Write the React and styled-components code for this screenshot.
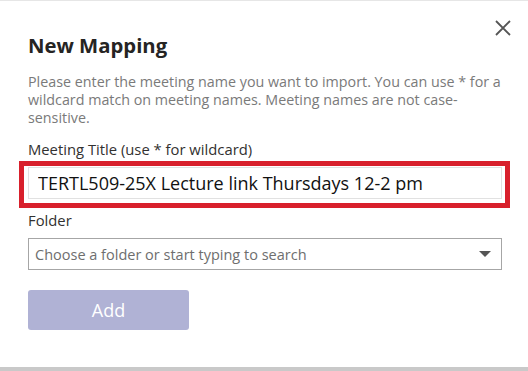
import styled, { createGlobalStyle } from "styled-components";

const GlobalStyle = createGlobalStyle`
  html, body {
    margin: 0;
    padding: 0;
    background: #ffffff;
  }
  * {
    box-sizing: border-box;
  }
`;

const Dialog = styled.div`
  position: relative;
  width: 528px;
  height: 371px;
  background: #fff;
  border-top: 1px solid #e6e6e6;
  border-bottom: 4px solid #c9c9c9;
  padding: 19px 26px 0 28px;
  font-family: "Open Sans", "Noto Sans", sans-serif;
  overflow: hidden;
`;

const Header = styled.div`
  display: flex;
  justify-content: space-between;
  align-items: flex-start;
  margin-right: -9px;
`;

const Title = styled.h1`
  margin: 11px 0 0;
  font-size: 20.3px;
  line-height: 28px;
  font-weight: 700;
  color: #252423;
`;

const CloseButton = styled.button`
  width: 16px;
  height: 16px;
  padding: 0;
  border: 0;
  background: none;
  cursor: pointer;
  display: flex;
`;

const Description = styled.p`
  margin: 14px 0 0;
  font-size: 14.3px;
  line-height: 18px;
  color: #7a7a7a;
`;

const Label = styled.label`
  display: block;
  margin-top: ${(p) => p.$top || 12}px;
  font-size: 14.8px;
  line-height: 20px;
  font-weight: 500;
  color: #323130;
`;

const Highlight = styled.div`
  margin: 2px -8px 0 -9px;
  padding: 1px 3px 4px 4px;
  border: 5px solid #d8202c;
`;

const TextInput = styled.input`
  display: block;
  width: 100%;
  height: 32px;
  padding: 0 9px;
  border: 1px solid #e1e1e1;
  font-family: inherit;
  font-size: 18px;
  color: #111;
  outline: none;
  background: #fff;
`;

const Select = styled.div`
  margin-top: 8px;
  height: 32px;
  border: 1px solid #a6a6a6;
  display: flex;
  align-items: center;
  justify-content: space-between;
  padding: 0 10px 0 6px;
  font-size: 14.5px;
  color: #6e6e6e;
`;

const Caret = styled.span`
  width: 0;
  height: 0;
  border-left: 6px solid transparent;
  border-right: 6px solid transparent;
  border-top: 6px solid #555;
`;

const AddButton = styled.button`
  margin-top: 20px;
  width: 161px;
  height: 40px;
  border: 0;
  border-radius: 3px;
  background: #b0b2d5;
  color: #fff;
  font-family: inherit;
  font-size: 18px;
  font-weight: 400;
`;

export default function App() {
  return (
    <>
      <GlobalStyle />
      <Dialog>
        <Header>
          <Title>New Mapping</Title>
          <CloseButton aria-label="Close">
            <svg width="16" height="16" viewBox="0 0 16 16">
              <path d="M1 1 L15 15 M15 1 L1 15" stroke="#555" strokeWidth="1.8" fill="none" />
            </svg>
          </CloseButton>
        </Header>
        <Description>
          Please enter the meeting name you want to import. You can use * for a wildcard match on
          meeting names. Meeting names are not case-sensitive.
        </Description>
        <Label $top={12}>Meeting Title (use * for wildcard)</Label>
        <Highlight>
          <TextInput defaultValue="TERTL509-25X Lecture link Thursdays 12-2 pm" />
        </Highlight>
        <Label $top={2}>Folder</Label>
        <Select>
          <span>Choose a folder or start typing to search</span>
          <Caret />
        </Select>
        <AddButton>Add</AddButton>
      </Dialog>
    </>
  );
}
